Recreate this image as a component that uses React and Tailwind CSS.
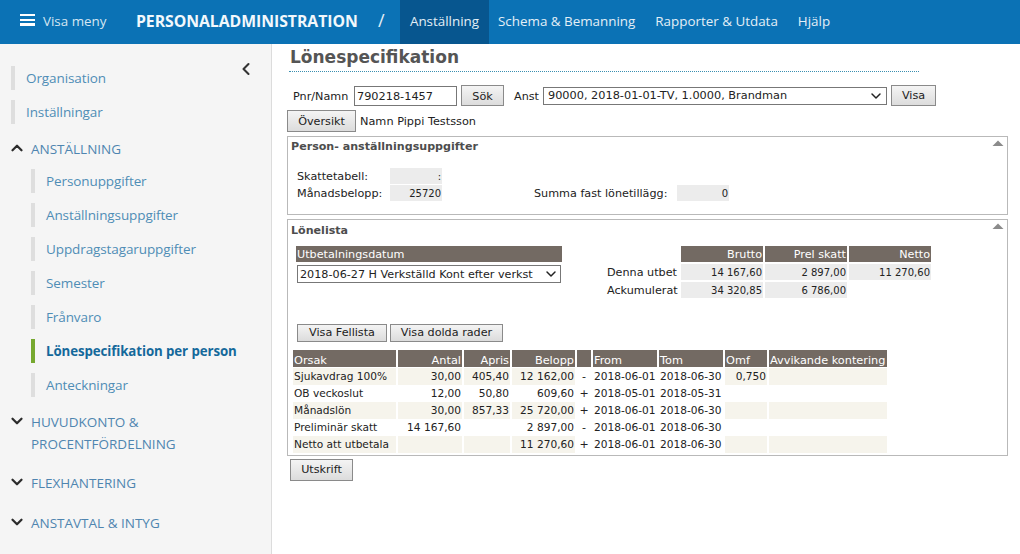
import React from "react";
import { ChevronDown, ChevronUp, ChevronLeft } from "lucide-react";

const nav = "font-['Open_Sans','Noto_Sans',sans-serif]";
const v = "font-['DejaVu_Sans',Verdana,sans-serif]";

function Btn({ children, className = "" }) {
  return (
    <button className={`h-[21px] border border-[#8a8a8a] bg-gradient-to-b from-[#f4f4f4] to-[#dcdcdc] text-[11.2px] text-[#222] ${v} ${className}`}>
      {children}
    </button>
  );
}

function SideItem({ children, active }) {
  return (
    <div className={`flex h-6 items-center border-l-4 pl-[11px] ${active ? "border-[#76a82f] pt-[2px] text-[13.3px] font-bold text-[#14699b]" : "border-[#dedede] text-[13.5px] text-[#4f8db5]"} tracking-[-0.1px]`}>
      {children}
    </div>
  );
}

function Group({ children, open }) {
  const Icon = open ? ChevronUp : ChevronDown;
  return (
    <div className="flex text-[13.5px] leading-[22px] text-[#4f85b0]">
      <span className="w-[31px] shrink-0 pl-[8px] pt-[1px]">
        <Icon size={18} strokeWidth={3} className="text-[#2c2c2c]" />
      </span>
      <span className="w-[200px]">{children}</span>
    </div>
  );
}

function Caret() {
  return (
    <svg width="12" height="7" viewBox="0 0 12 7" className="absolute right-[3px] top-[3px]">
      <path d="M6 0.5 L11.5 6 H0.5 Z" fill="#8b8b8b" />
    </svg>
  );
}

const cols = "grid grid-cols-[103px_64px_46px_63px_14px_64px_64px_42px_118px] gap-x-[2px]";
const rows = [
  ["Sjukavdrag 100%", "30,00", "405,40", "12 162,00", "-", "2018-06-01", "2018-06-30", "0,750", ""],
  ["OB veckoslut", "12,00", "50,80", "609,60", "+", "2018-05-01", "2018-05-31", "", ""],
  ["Månadslön", "30,00", "857,33", "25 720,00", "+", "2018-06-01", "2018-06-30", "", ""],
  ["Preliminär skatt", "14 167,60", "", "2 897,00", "-", "2018-06-01", "2018-06-30", "", ""],
  ["Netto att utbetala", "", "", "11 270,60", "+", "2018-06-01", "2018-06-30", "", ""],
];
const heads = ["Orsak", "Antal", "Apris", "Belopp", "", "From", "Tom", "Omf", "Avvikande kontering"];
const rightCols = [1, 2, 3, 7];
const headRight = [1, 2, 3];

export default function App() {
  return (
    <div className={`flex h-[554px] w-[1020px] flex-col overflow-hidden bg-white ${nav}`}>
      <header className="flex h-11 shrink-0 items-center bg-[#0b72b5] text-[13.4px] text-[#e3eff7]">
        <span className="mb-[1px] ml-5 flex w-[116px] items-center">
          <span className="mb-[3px] flex h-[12px] w-[15px] flex-col justify-between">
            <i className="h-[2.5px] bg-white" />
            <i className="h-[2.5px] bg-white" />
            <i className="h-[2.5px] bg-white" />
          </span>
          <span className="ml-2 text-[#d5e6f2]">Visa meny</span>
        </span>
        <span className="w-[222px] whitespace-nowrap text-[15.8px] font-bold tracking-[-0.05px] text-[#f2f8fc]">PERSONALADMINISTRATION</span>
        <span className="mb-[3px] ml-[20px] w-[22px] text-[18px]">/</span>
        <span className="flex h-full w-[89px] items-center justify-center bg-[#07568f] pb-[2px]">Anställning</span>
        <span className="mb-[2px] ml-[9px]">Schema &amp; Bemanning</span>
        <span className="mb-[2px] ml-5">Rapporter &amp; Utdata</span>
        <span className="mb-[2px] ml-5">Hjälp</span>
      </header>

      <div className="flex flex-1">
        <aside className="relative w-[272px] shrink-0 border-r border-[#dcdcdc] bg-[#f5f5f5] pl-[11px] pt-[22px]">
          <ChevronLeft size={20} strokeWidth={2.5} className="absolute left-[236px] top-[15px] text-[#333]" />
          <div className="flex flex-col gap-[10px]">
            <SideItem>Organisation</SideItem>
            <SideItem>Inställningar</SideItem>
          </div>
          <div className="-ml-[11px] mt-[14px]">
            <Group open>ANSTÄLLNING</Group>
          </div>
          <div className="ml-5 mt-[9px] flex flex-col gap-[10px]">
            <SideItem>Personuppgifter</SideItem>
            <SideItem>Anställningsuppgifter</SideItem>
            <SideItem>Uppdragstagaruppgifter</SideItem>
            <SideItem>Semester</SideItem>
            <SideItem>Frånvaro</SideItem>
            <SideItem active>Lönespecifikation per person</SideItem>
            <SideItem>Anteckningar</SideItem>
          </div>
          <div className="-ml-[11px] mt-[14px] flex flex-col gap-[17px]">
            <Group>HUVUDKONTO &amp; PROCENTFÖRDELNING</Group>
            <Group>FLEXHANTERING</Group>
            <div className="mt-[1px]">
              <Group>ANSTAVTAL &amp; INTYG</Group>
            </div>
          </div>
        </aside>

        <main className={`flex-1 pl-[15px] text-[11.2px] text-[#222] ${v}`}>
          <h1 className="ml-[2px] mt-[3px] h-[25px] w-[630px] border-b border-dotted border-[#3a8fb0] pl-[1px] text-[17px] font-bold leading-[20px] text-[#555]">
            Lönespecifikation
          </h1>

          <div className="mt-[13px] flex h-[21px] items-center">
            <span className="ml-[6px] w-[61px] pt-[4px]">Pnr/Namn</span>
            <input readOnly value="790218-1457" className={`h-[20px] w-[103px] border border-[#777] px-[2px] pt-[2px] text-[11.3px] ${v}`} />
            <Btn className="ml-1 w-[43px] pt-[3px]">Sök</Btn>
            <span className="ml-[10px] w-[29px] pt-[4px]">Anst</span>
            <span className="relative flex h-[18px] w-[344px] items-center border border-[#777] pl-1 pt-[2px] text-[11.3px]">
              90000, 2018-01-01-TV, 1.0000, Brandman
              <ChevronDown size={16} strokeWidth={2.2} className="absolute right-[2px] top-[0px] text-[#222]" />
            </span>
            <Btn className="ml-1 w-[45px] pt-[2px]">Visa</Btn>
          </div>

          <div className="mt-1 flex h-[22px] items-center">
            <Btn className="!h-[22px] w-[69px] pt-[2px]">Översikt</Btn>
            <span className="ml-1 pt-[2px] text-[11.3px]">Namn Pippi Testsson</span>
          </div>

          <section className="relative mt-1 h-[79px] w-[721px] border border-[#b9b9b9]">
            <Caret />
            <h2 className="ml-[3px] mt-[2px] text-[11.1px] font-bold leading-[15px] text-[#4d4d4d]">Person- anställningsuppgifter</h2>
            <div className="ml-[9px] mt-[14px] flex h-[16px] items-center">
              <span className="w-[93px] pt-[2px]">Skattetabell:</span>
              <span className="h-full w-[52px] bg-[#ececec] pr-[1px] text-right text-[10px] leading-[17px]">:</span>
            </div>
            <div className="ml-[9px] mt-[1px] flex h-[16px] items-center">
              <span className="w-[93px] pt-[2px]">Månadsbelopp:</span>
              <span className="h-full w-[52px] bg-[#ececec] pr-[1px] text-right text-[10px] leading-[17px]">25720</span>
              <span className="ml-[92px] w-[143px] pt-[2px]">Summa fast lönetillägg:</span>
              <span className="h-full w-[52px] bg-[#ececec] pr-[1px] text-right text-[10px] leading-[17px]">0</span>
            </div>
          </section>

          <section className="relative mt-[4px] h-[237px] w-[721px] border border-[#b9b9b9]">
            <Caret />
            <h2 className="ml-[3px] mt-[3px] text-[11.1px] font-bold leading-[15px] text-[#4d4d4d]">Lönelista</h2>

            <div className="ml-[8px] mt-[8px] flex">
              <div className="w-[266px]">
                <div className="h-[16px] bg-[#736a63] pl-[1px] leading-[17px] text-white">Utbetalningsdatum</div>
                <div className="relative ml-[1px] mt-[3px] flex h-[18px] w-[264px] items-center border border-[#777] pl-[2px] pt-[2px] text-[11.2px]">
                  2018-06-27 H Verkställd Kont efter verkst
                  <ChevronDown size={16} strokeWidth={2.2} className="absolute right-[1px] top-[0px] text-[#222]" />
                </div>
              </div>
              <div className="ml-[45px] mt-[18px] flex w-[74px] flex-col gap-[2px]">
                <span className="h-[16px] leading-[18px]">Denna utbet</span>
                <span className="h-[16px] leading-[18px]">Ackumulerat</span>
              </div>
              <div className="grid grid-cols-[82px_82px_82px] gap-x-[2px] gap-y-[2px] text-right">
                {["Brutto", "Prel skatt", "Netto"].map((h) => (
                  <div key={h} className="h-[16px] bg-[#736a63] pr-[1px] leading-[17px] text-white">{h}</div>
                ))}
                {["14 167,60", "2 897,00", "11 270,60", "34 320,85", "6 786,00"].map((c, i) => (
                  <div key={i} className="h-[16px] bg-[#ececec] pr-[1px] text-[10px] leading-[17px]">{c}</div>
                ))}
              </div>
            </div>

            <div className="ml-[9px] mt-[26px] flex gap-[3px]">
              <Btn className="!h-[18px] w-[90px]">Visa Fellista</Btn>
              <Btn className="!h-[18px] w-[113px]">Visa dolda rader</Btn>
            </div>

            <div className="ml-[5px] mt-[8px] w-[594px]">
              <div className={`${cols} h-[17px] text-white`}>
                {heads.map((h, i) => (
                  <div key={i} className={`overflow-hidden whitespace-nowrap bg-[#736a63] px-[1px] text-[11.3px] leading-[21px] ${headRight.includes(i) ? "text-right" : ""}`}>{h}</div>
                ))}
              </div>
              {rows.map((r, ri) => (
                <div key={ri} className={`${cols} mt-[1px] h-[16px] items-stretch text-[10.6px]`}>
                  {r.map((c, i) => {
                    const shaded = ri % 2 === 0 && i !== 4 && i !== 5 && i !== 6;
                    return (
                      <div key={i} className={`whitespace-nowrap px-[1px] leading-[17px] ${shaded ? "bg-[#f6f4ec]" : ""} ${i === 4 ? "text-center text-[11px]" : ""} ${rightCols.includes(i) ? "text-right" : ""}`}>{c}</div>
                    );
                  })}
                </div>
              ))}
            </div>
          </section>

          <Btn className="ml-[3px] mt-[3px] !h-[22px] w-[63px]">Utskrift</Btn>
        </main>
      </div>
    </div>
  );
}
